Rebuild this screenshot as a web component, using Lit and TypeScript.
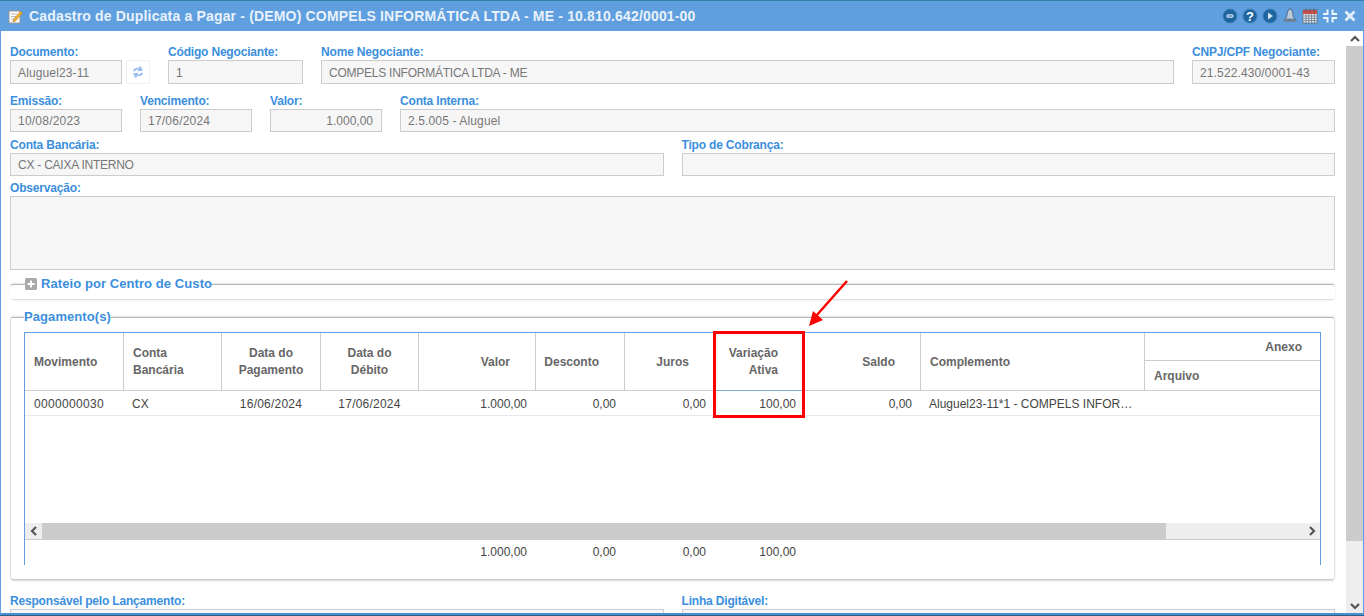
import { LitElement, html, css, svg } from "lit";
import { customElement } from "lit/decorators.js";

const circleIcon = (glyph: unknown) => html`<svg class="ico" viewBox="0 0 16 16" width="16" height="16">
  <circle cx="8" cy="8" r="7" fill="#1d659f"></circle>
  <circle cx="8" cy="8" r="7" fill="none" stroke="#3f82ba" stroke-width="1"></circle>
  ${glyph}
</svg>`;

@customElement("app-root")
export class AppRoot extends LitElement {
  static styles = css`
    :host { display: block; font-family: "Liberation Sans", Arial, sans-serif; font-size: 12px; }
    * { box-sizing: border-box; }
    .page { position: relative; width: 1364px; height: 616px; overflow: hidden; background: #fff; display: flex; flex-direction: column; border-bottom: 1px solid #2b5f8a; }

    .titlebar { flex: none; height: 31px; background: #5f9fdf; border-top: 1px solid #2f7fa8; display: flex; align-items: center; padding: 0 6px 0 8px; }
    .title { color: #e9f2fb; font-weight: bold; font-size: 14px; letter-spacing: .17px; margin-left: 6px; flex: 1; white-space: nowrap; }
    .icons { display: flex; align-items: center; gap: 4px; }
    .ico { display: block; flex: none; }

    .main { flex: 1; min-height: 0; display: flex; border-left: 1px solid #5f9fdf; border-right: 1px solid #5f9fdf; border-bottom: 2px solid #4a8ccc; }
    .content { flex: 1; min-width: 0; overflow: hidden; padding: 13px 11px 0 9px; }

    .row { display: grid; column-gap: 18px; }
    .r1 { grid-template-columns: 140px 135px 1fr 143px; }
    .r2 { grid-template-columns: 112px 112px 112px 1fr; margin-top: 9px; }
    .r3 { grid-template-columns: 1fr 1fr; margin-top: 5px; }
    .r4 { margin-top: 4px; }
    .r5 { grid-template-columns: 1fr 1fr; margin-top: 13px; }

    label { display: block; height: 14px; line-height: 16px; margin-bottom: 2px; color: #3b8fdd; font-weight: bold; font-size: 12px; letter-spacing: -.18px; white-space: nowrap; }
    .inp { height: 23px; line-height: 23px; border: 1px solid #ccc; background: #f6f6f6; color: #777; padding: 0 7px; font-size: 12px; white-space: nowrap; overflow: hidden; }
    .r1 .inp { height: 24px; line-height: 25px; }
    .num { letter-spacing: .22px; }
    .code { letter-spacing: .32px; }
    .mix { letter-spacing: .13px; }
    .caps { letter-spacing: -.24px; }
    .right { text-align: right; padding-right: 8px; }
    .area { height: 74px; }
    .with-btn { display: flex; gap: 4px; }
    .with-btn .inp { flex: 1; }
    .sync { flex: none; width: 24px; height: 24px; border: 1px solid #f0f0f0; border-radius: 2px; background: #fff; display: flex; align-items: center; justify-content: center; }

    fieldset { margin: 0; min-width: 0; border: 0; border-top: 1px solid #b4b4b4; border-radius: 3px; box-shadow: 0 -1px 3px -1px rgba(0,0,0,.22), 0 2px 2px -1px rgba(0,0,0,.16); background: #fff; }
    legend { margin-left: 15px; padding: 0; height: 14px; line-height: 14px; background: #fff; color: #3b8fdd; font-size: 13px; font-weight: bold; letter-spacing: .08px; display: flex; align-items: center; gap: 4px; white-space: nowrap; }
    .fs-a { margin-top: 7px; height: 22px; padding: 0; }
    .fs-b { margin-top: 11px; height: 270px; padding: 8px 13px 0 13px; border-left: 1px solid #e2e2e2; border-right: 1px solid #e2e2e2; border-bottom: 1px solid #ccc; }
    .fs-b legend { margin-left: 0; }

    .table { width: 1297px; height: 233px; border: 1px solid #5f9fdf; border-bottom: 0; display: flex; flex-direction: column; }
    .grid { display: grid; grid-template-columns: 99px 98px 99px 98px 117px 89px 90px 90px 116px 224px 175px; }
    .head { height: 58px; border-bottom: 1px solid #ccc; }
    .th { border-right: 1px solid #ccc; display: flex; align-items: center; color: #666; font-weight: bold; font-size: 12px; line-height: 17px; padding: 1px 9px 0; white-space: pre-line; }
    .th.r { justify-content: flex-end; text-align: right; padding-right: 25px; }
    .th.wide { padding-right: 26px; }
    .th.c { justify-content: center; text-align: center; }
    .th.last { border-right: 0; padding: 0; flex-direction: column; align-items: stretch; }
    .th.hl { position: relative; }
    .th.hl::after { content: ""; position: absolute; left: 0; right: 0; bottom: -1px; height: 1px; background: #7fa9d6; }
    .sub { flex: 1; display: flex; align-items: center; padding: 1px 9px 0; }
    .sub.top { justify-content: flex-end; padding-right: 18px; border-bottom: 1px solid #ccc; flex: none; height: 28px; }

    .tr { height: 25px; border-bottom: 1px solid #e8e8e8; }
    .td { color: #444; padding: 0 9px 0 8px; line-height: 26px; font-size: 12px; white-space: nowrap; overflow: hidden; }
    .td.r { text-align: right; }
    .td.c { text-align: center; }
    .td.ell { text-overflow: ellipsis; padding-right: 11px; }
    .td.first { padding-left: 9px; }
    .spacer { flex: 1; }

    .hscroll { flex: none; height: 17px; display: flex; background: #eee; border-bottom: 1px solid #ccc; }
    .btn-h { flex: none; width: 17px; display: flex; align-items: center; justify-content: center; }
    .h-thumb { flex: none; width: 1124px; background: #ccc; }
    .h-track { flex: 1; }
    .foot { flex: none; height: 25px; }
    .foot .td { line-height: 24px; }

    .vscroll { flex: none; width: 17px; display: flex; flex-direction: column; background: #eee; }
    .v-btn { flex: none; height: 15px; display: flex; align-items: center; justify-content: center; background: #fff; }
    .v-btn.down { background: #eee; height: 14px; }
    .v-thumb { flex: none; height: 495px; background: #ccc; }
    .v-track { flex: 1; }

    .overlay-rect { position: absolute; left: 713px; top: 331px; width: 92px; height: 87px; border: 3px solid #f00; }
    .overlay-arrow { position: absolute; left: 800px; top: 275px; }
  `;

  render() {
    const chev = (d: string) => html`<svg class="ico" viewBox="0 0 10 10" width="10" height="10"><path d="${d}" fill="none" stroke="#555" stroke-width="2.2"></path></svg>`;
    return html`
      <div class="page">
        <div class="titlebar">
          <svg class="ico" viewBox="0 0 15 15" width="15" height="15">
            <rect x="1" y="2" width="11" height="12" fill="#fdfdfd" stroke="#9a9a9a" stroke-width="1"></rect>
            <path d="M3 5h6M3 7.5h5M3 10h4" stroke="#bdbdbd" stroke-width="1"></path>
            <path d="M5.5 10.5 L12.5 2.5 L14.3 4.2 L7.3 12 L5 12.8 Z" fill="#f2b535" stroke="#b57a14" stroke-width=".7"></path>
          </svg>
          <div class="title">Cadastro de Duplicata a Pagar - (DEMO) COMPELS INFORMÁTICA LTDA - ME - 10.810.642/0001-00</div>
          <div class="icons">
            ${circleIcon(svg`<rect x="5" y="6.8" width="6" height="2.4" rx="1.2" fill="none" stroke="#d7e6f3" stroke-width="1.2"></rect>`)}
            ${circleIcon(svg`<text x="8" y="12.500" text-anchor="middle" font-size="13" font-weight="bold" font-family="Liberation Sans" fill="#fff">?</text>`)}
            ${circleIcon(svg`<path d="M6 4.5 L11 8 L6 11.5 Z" fill="#d7e6f3"></path>`)}
            <svg class="ico" viewBox="0 0 16 16" width="16" height="16">
              <path d="M8 .800c.9 0 1.300.6 1.300 1.300 1.500.9 1.500 3 1.800 5.400.2 1.700 1.500 2.900 2.400 3.700H2.500c.9-.8 2.200-2 2.400-3.700.3-2.400.3-4.500 1.800-5.400C6.700 1.400 7.100.800 8 .800z" fill="#bccbd9" stroke="#3f5d7a" stroke-width=".9"></path>
              <path d="M1.500 11.500h13v1.600c0 .6-.4 1-1 1h-11c-.6 0-1-.4-1-1z" fill="#6d8499"></path>
            </svg>
            <svg class="ico" viewBox="0 0 16 16" width="16" height="16">
              <rect x="1" y="2" width="14" height="13" fill="#eef1f5" stroke="#5b6b7c" stroke-width=".8"></rect>
              <rect x="1" y="2" width="14" height="4" fill="#c8504c"></rect>
              <path d="M4 .8v3M8 .8v3M12 .8v3" stroke="#556" stroke-width="1"></path>
              <path d="M1.500 8h13M1.500 10.300h13M1.500 12.600h13M4 6v9M6.800 6v9M9.600 6v9M12.400 6v9" stroke="#6d7f92" stroke-width=".9"></path>
            </svg>
            <svg class="ico" viewBox="0 0 16 16" width="16" height="16">
              <path d="M5.500 1.500v4.500H1M10.500 1.500v4.500H15M5.500 14.500V10H1M10.500 14.500V10H15" fill="none" stroke="#eef5fc" stroke-width="2"></path>
            </svg>
            <svg class="ico" viewBox="0 0 16 16" width="16" height="16">
              <path d="M3.500 3.500 L12.500 12.500 M12.500 3.500 L3.500 12.500" fill="none" stroke="#e6f0fa" stroke-width="2.800"></path>
            </svg>
          </div>
        </div>

        <div class="main">
          <div class="content">
            <div class="row r1">
              <div>
                <label>Documento:</label>
                <div class="with-btn">
                  <div class="inp mix">Aluguel23-11</div>
                  <div class="sync">
                    <svg class="ico" viewBox="0 0 12 16" width="12" height="16">
                      <path d="M1 7.200 C1.300 4.600 3.700 3.300 6.800 3.900 L8.300 1.500 L11 6.800 L5.300 7.200 L6.500 5.500 C4.900 5.200 3.600 5.900 3.200 7.200 Z" fill="#9cbdf0"></path>
                      <path d="M11 8.800 C10.700 11.400 8.300 12.700 5.200 12.100 L3.700 14.500 L1 9.200 L6.700 8.800 L5.500 10.500 C7.100 10.800 8.400 10.100 8.800 8.800 Z" fill="#9cbdf0"></path>
                    </svg>
                  </div>
                </div>
              </div>
              <div><label>Código Negociante:</label><div class="inp">1</div></div>
              <div><label>Nome Negociante:</label><div class="inp caps">COMPELS INFORMÁTICA LTDA - ME</div></div>
              <div><label>CNPJ/CPF Negociante:</label><div class="inp mix">21.522.430/0001-43</div></div>
            </div>
            <div class="row r2">
              <div><label>Emissão:</label><div class="inp num">10/08/2023</div></div>
              <div><label>Vencimento:</label><div class="inp num">17/06/2024</div></div>
              <div><label>Valor:</label><div class="inp right">1.000,00</div></div>
              <div><label>Conta Interna:</label><div class="inp mix">2.5.005 - Aluguel</div></div>
            </div>
            <div class="row r3">
              <div><label>Conta Bancária:</label><div class="inp caps">CX - CAIXA INTERNO</div></div>
              <div><label>Tipo de Cobrança:</label><div class="inp"></div></div>
            </div>
            <div class="r4"><label>Observação:</label><div class="inp area"></div></div>

            <fieldset class="fs-a">
              <legend>
                <svg class="ico" viewBox="0 0 12 12" width="12" height="12">
                  <rect width="12" height="12" rx="1.500" fill="#a9a9a9"></rect>
                  <path d="M6 2.500v7M2.500 6h7" stroke="#fff" stroke-width="2"></path>
                </svg>
                Rateio por Centro de Custo
              </legend>
            </fieldset>

            <fieldset class="fs-b">
              <legend>Pagamento(s)</legend>
              <div class="table">
                <div class="grid head">
                  <div class="th">Movimento</div>
                  <div class="th">Conta
Bancária</div>
                  <div class="th c">Data do
Pagamento</div>
                  <div class="th c">Data do
Débito</div>
                  <div class="th r">Valor</div>
                  <div class="th r">Desconto</div>
                  <div class="th r">Juros</div>
                  <div class="th r hl wide">Variação
Ativa</div>
                  <div class="th r">Saldo</div>
                  <div class="th">Complemento</div>
                  <div class="th last">
                    <div class="sub top">Anexo</div>
                    <div class="sub">Arquivo</div>
                  </div>
                </div>
                <div class="grid tr">
                  <div class="td first code">0000000030</div>
                  <div class="td">CX</div>
                  <div class="td c num">16/06/2024</div>
                  <div class="td c num">17/06/2024</div>
                  <div class="td r">1.000,00</div>
                  <div class="td r">0,00</div>
                  <div class="td r">0,00</div>
                  <div class="td r">100,00</div>
                  <div class="td r">0,00</div>
                  <div class="td ell">Aluguel23-11*1 - COMPELS INFORMÁTICA LTDA - ME</div>
                  <div class="td"></div>
                </div>
                <div class="spacer"></div>
                <div class="hscroll">
                  <div class="btn-h">${chev("M7 1 L3 5 L7 9")}</div>
                  <div class="h-thumb"></div>
                  <div class="h-track"></div>
                  <div class="btn-h">${chev("M3 1 L7 5 L3 9")}</div>
                </div>
                <div class="grid foot">
                  <div></div><div></div><div></div><div></div>
                  <div class="td r">1.000,00</div>
                  <div class="td r">0,00</div>
                  <div class="td r">0,00</div>
                  <div class="td r">100,00</div>
                  <div></div><div></div><div></div>
                </div>
              </div>
            </fieldset>

            <div class="row r5">
              <div><label>Responsável pelo Lançamento:</label><div class="inp"></div></div>
              <div><label>Linha Digitável:</label><div class="inp"></div></div>
            </div>
          </div>
          <div class="vscroll">
            <div class="v-btn">${chev("M1 7 L5 3 L9 7")}</div>
            <div class="v-thumb"></div>
            <div class="v-track"></div>
            <div class="v-btn down">${chev("M1 3 L5 7 L9 3")}</div>
          </div>
        </div>

        <div class="overlay-rect"></div>
        <svg class="overlay-arrow" viewBox="0 0 50 55" width="50" height="55">
          <path d="M47 6 L16 41" stroke="#f00" stroke-width="2.500" fill="none"></path>
          <path d="M9 51 L13 36 L23 45 Z" fill="#f00"></path>
        </svg>
      </div>
    `;
  }
}
